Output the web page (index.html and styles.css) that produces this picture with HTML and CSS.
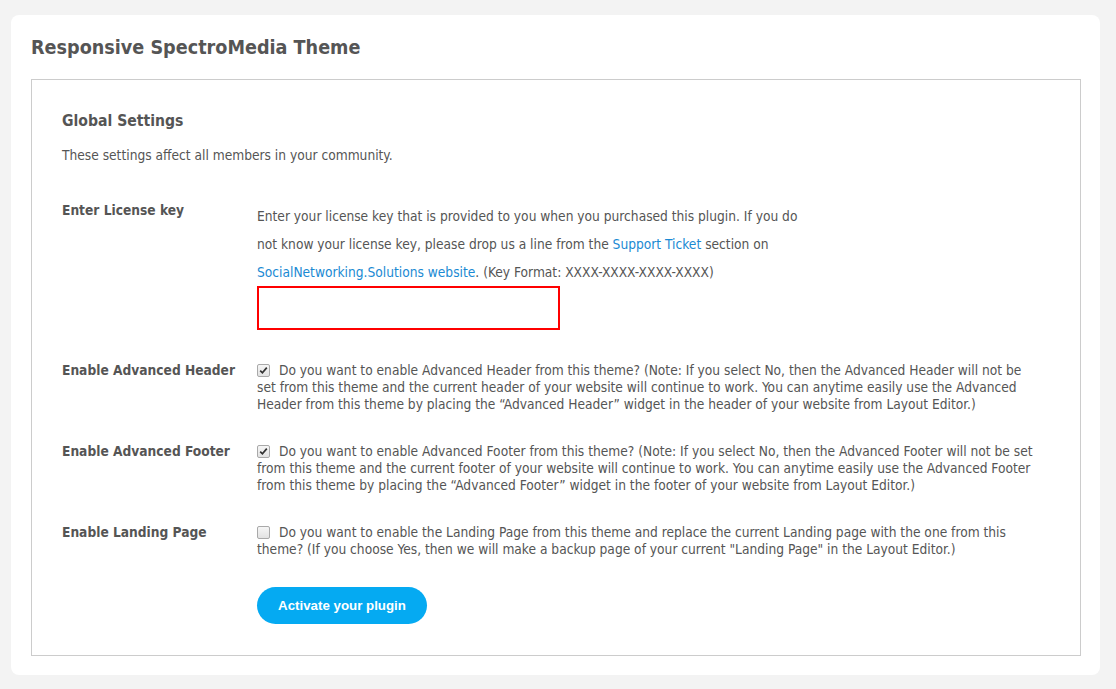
FILE: index.html
```html
<!DOCTYPE html>
<html>
<head>
<meta charset="utf-8">
<title>Responsive SpectroMedia Theme</title>
<link rel="stylesheet" href="styles.css">
</head>
<body>
<div class="card">
  <h2 class="page-title">Responsive SpectroMedia Theme</h2>
  <form class="settings-box">
    <h3 class="box-title">Global Settings</h3>
    <p class="box-desc">These settings affect all members in your community.</p>

    <div class="row row-license">
      <div class="label">Enter License key</div>
      <div class="field">
        <p class="license-desc">Enter your license key that is provided to you when you purchased this plugin. If you do not know your license key, please drop us a line from the <a href="#">Support Ticket</a> section on <a href="#">SocialNetworking.Solutions website</a>. (Key Format: XXXX-XXXX-XXXX-XXXX)</p>
        <input type="text" class="license-input">
      </div>
    </div>

    <div class="row">
      <div class="label">Enable Advanced Header</div>
      <div class="field check-field">
        <input type="checkbox" class="check" checked>Do you want to enable Advanced Header from this theme? (Note: If you select No, then the Advanced Header will not be set from this theme and the current header of your website will continue to work. You can anytime easily use the Advanced Header from this theme by placing the “Advanced Header” widget in the header of your website from Layout Editor.)
      </div>
    </div>

    <div class="row">
      <div class="label">Enable Advanced Footer</div>
      <div class="field check-field">
        <input type="checkbox" class="check" checked>Do you want to enable Advanced Footer from this theme? (Note: If you select No, then the Advanced Footer will not be set from this theme and the current footer of your website will continue to work. You can anytime easily use the Advanced Footer from this theme by placing the “Advanced Footer” widget in the footer of your website from Layout Editor.)
      </div>
    </div>

    <div class="row row-before-action">
      <div class="label">Enable Landing Page</div>
      <div class="field check-field">
        <input type="checkbox" class="check">Do you want to enable the Landing Page from this theme and replace the current Landing page with the one from this theme? (If you choose Yes, then we will make a backup page of your current "Landing Page" in the Layout Editor.)
      </div>
    </div>

    <div class="row row-last">
      <div class="label"></div>
      <div class="field">
        <button type="button" class="btn">Activate your plugin</button>
      </div>
    </div>
  </form>
</div>
</body>
</html>
```

FILE: styles.css
```css
html, body {
  margin: 0;
  background: #f3f3f3;
}
body {
  padding: 15px 16px 15px 11px;
  font-family: "DejaVu Sans Condensed", "DejaVu Sans", sans-serif;
  color: #555555;
  font-size: 13.65px;
}
.card {
  background: #ffffff;
  border-radius: 8px;
  padding: 21px 19px 19px 20px;
}
.page-title {
  margin: 0 0 19px 0;
  font-size: 19.6px;
  line-height: 24px;
  font-weight: bold;
  color: #555555;
}
.settings-box {
  border: 1px solid #cccccc;
  padding: 31px 30px 31px 30px;
}
.box-title {
  margin: 0;
  font-size: 15.6px;
  line-height: 20px;
  font-weight: bold;
  color: #555555;
}
.box-desc {
  margin: 16px 0 38px 0;
  line-height: 17px;
}
.row {
  display: flex;
  margin-bottom: 30px;
}
.row-license {
  margin-bottom: 32px;
}
.row-before-action {
  margin-bottom: 29px;
}
.row-last {
  margin-bottom: 0;
}
.label {
  width: 195px;
  flex-shrink: 0;
  font-weight: bold;
  line-height: 17px;
}
.field {
  flex: 1;
  line-height: 17px;
}
.check-field {
  padding-right: 10px;
}
.license-desc {
  margin: 0;
  max-width: 552px;
  line-height: 28px;
}
a {
  color: #1b8ad3;
  text-decoration: none;
}
.license-input {
  display: block;
  box-sizing: border-box;
  width: 303px;
  height: 44px;
  margin: 0;
  border: 2px solid #ff0000;
  border-radius: 0;
  outline: none;
}
.check {
  -webkit-appearance: none;
  appearance: none;
  box-sizing: border-box;
  width: 13px;
  height: 13px;
  margin: 0 9px 0 0;
  vertical-align: -2px;
  border: 1px solid #a9a9a9;
  border-radius: 2px;
  background: linear-gradient(#f6f6f6, #e2e2e2);
}
.check:checked {
  background: url("data:image/svg+xml,%3Csvg xmlns='http://www.w3.org/2000/svg' viewBox='0 0 11 11'%3E%3Cpath d='M2.2 5.6 L4.4 7.8 L8.8 2.6' fill='none' stroke='%23333' stroke-width='1.7'/%3E%3C/svg%3E") center / 11px 11px no-repeat, linear-gradient(#f6f6f6, #e2e2e2);
}
.btn {
  width: 170px;
  height: 37px;
  border: none;
  border-radius: 19px;
  background: #05aaf2;
  color: #ffffff;
  font-family: "Liberation Sans", Arial, sans-serif;
  font-weight: bold;
  font-size: 13.3px;
  cursor: pointer;
}
```
